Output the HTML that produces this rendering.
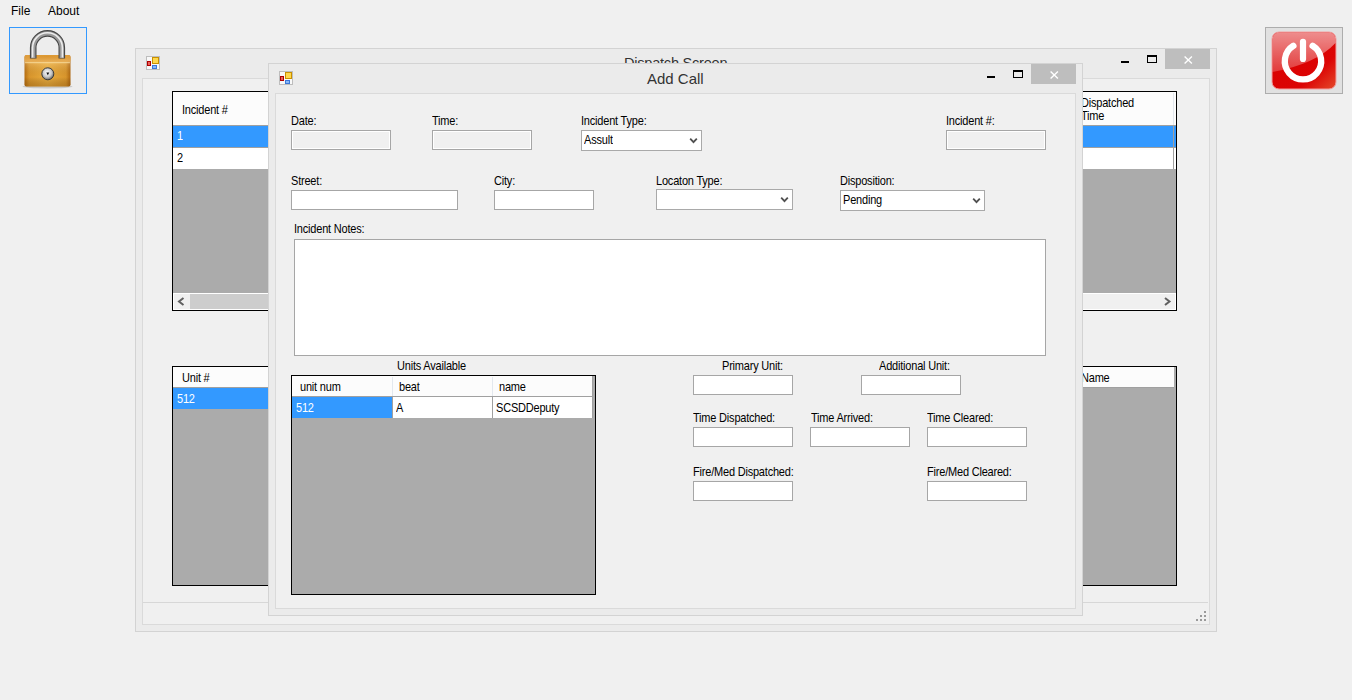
<!DOCTYPE html>
<html><head><meta charset="utf-8">
<style>
html,body{margin:0;padding:0;}
body{width:1352px;height:700px;overflow:hidden;background:#f0f0f0;position:relative;font-family:"Liberation Sans",sans-serif;font-size:11px;color:#000;}
.a{position:absolute;box-sizing:border-box;}
.t{position:absolute;white-space:nowrap;line-height:13px;font-size:11px;letter-spacing:-0.2px;transform:scaleY(1.12);transform-origin:0 10.3px;}
.nt{transform:none;}
.w{color:#fff;}
.win{position:absolute;box-sizing:border-box;border:1px solid #d3d3d3;background:#ebebeb;}
.cli{position:absolute;box-sizing:border-box;border:1px solid #dadada;background:#f0f0f0;}
.close{position:absolute;background:#bebebe;}
.tb{position:absolute;box-sizing:border-box;border:1px solid #a6a6a6;background:#fff;}
.ro{background:#f0f0f0;box-shadow:inset 0 0 0 1px #fff;}
.cb{position:absolute;box-sizing:border-box;border:1px solid #a9a9a9;background:#fff;}
.grid{position:absolute;box-sizing:border-box;border:1px solid #000;background:#ababab;overflow:hidden;}
.hdr{position:absolute;background:#fcfcfc;}
.sel{position:absolute;background:#3399ff;}
.wh{position:absolute;background:#fff;}
.gl{position:absolute;background:#a0a0a0;}
.hl{position:absolute;background:#e3e8ee;}
</style></head><body>

<!-- menu -->
<div class="t nt" style="left:11px;top:4px;font-size:12px;line-height:14px;letter-spacing:0;">File</div>
<div class="t nt" style="left:48px;top:4px;font-size:12px;line-height:14px;letter-spacing:0;">About</div>

<!-- lock button -->
<div class="a" style="left:9px;top:27px;width:78px;height:67px;border:1px solid #3399ff;background:#ededed;"></div>
<svg class="a" style="left:0;top:0;" width="100" height="100" viewBox="0 0 100 100">
<defs>
<linearGradient id="gold" x1="0" y1="0" x2="1" y2="0">
<stop offset="0" stop-color="#b86e10"/><stop offset="0.1" stop-color="#d9962c"/><stop offset="0.5" stop-color="#eaad3e"/><stop offset="0.9" stop-color="#d9962c"/><stop offset="1" stop-color="#b06810"/>
</linearGradient>
<linearGradient id="goldv" x1="0" y1="0" x2="0" y2="1">
<stop offset="0" stop-color="#fff" stop-opacity="0"/><stop offset="0.3" stop-color="#fff" stop-opacity="0.12"/><stop offset="0.7" stop-color="#000" stop-opacity="0"/><stop offset="1" stop-color="#6a3a00" stop-opacity="0.3"/>
</linearGradient>
<radialGradient id="lid" cx="0.5" cy="0.2" r="0.7">
<stop offset="0" stop-color="#d8902a"/><stop offset="1" stop-color="#e6a84a"/>
</radialGradient>
<radialGradient id="key" cx="0.45" cy="0.4" r="0.6">
<stop offset="0" stop-color="#ffffff"/><stop offset="0.6" stop-color="#c8c8c8"/><stop offset="1" stop-color="#6a6a6a"/>
</radialGradient>
</defs>
<ellipse cx="47.5" cy="86.5" rx="25" ry="2" fill="#000" opacity="0.15"/>
<rect x="24.5" y="55" width="46" height="31.5" rx="2" fill="url(#gold)"/>
<rect x="24.5" y="55" width="46" height="7.5" rx="2" fill="url(#lid)" opacity="0.85"/>
<rect x="25" y="62" width="45" height="1.3" fill="#fbe0a0" opacity="0.65"/>
<rect x="24.5" y="55" width="46" height="31.5" rx="2" fill="url(#goldv)"/>
<path d="M33.2,58.5 V47.7 A14.3,14.3 0 0 1 61.8,47.7 V58.5" fill="none" stroke="#474747" stroke-width="6.6"/>
<path d="M33.2,58 V47.7 A14.3,14.3 0 0 1 61.8,47.7 V58" fill="none" stroke="#9a9a9a" stroke-width="4.4"/>
<path d="M32.6,57.5 V47.7 A14.9,14.9 0 0 1 62.4,47.7 V57.5" fill="none" stroke="#ececec" stroke-width="1.6"/>
<circle cx="47.8" cy="73.8" r="6" fill="url(#key)" stroke="#3a3a3a" stroke-width="1"/>
<path d="M46.3,72.4 L49.3,72.4 L47.8,75.2 Z" fill="#111"/>
</svg>

<!-- power button -->
<div class="a" style="left:1265px;top:27px;width:78px;height:67px;border:1px solid #adadad;background:#e1e1e1;"></div>
<svg class="a" style="left:1260px;top:20px;" width="92" height="80" viewBox="1260 20 92 80">
<defs>
<linearGradient id="red" x1="0" y1="0" x2="1" y2="1">
<stop offset="0" stop-color="#d80000"/><stop offset="0.7" stop-color="#dc0404"/><stop offset="1" stop-color="#e44a2a"/>
</linearGradient>
<linearGradient id="gloss" x1="0" y1="0" x2="0" y2="1">
<stop offset="0" stop-color="#fff" stop-opacity="0.55"/><stop offset="1" stop-color="#fff" stop-opacity="0.22"/>
</linearGradient>
</defs>
<rect x="1272" y="32" width="64" height="57" rx="7" fill="url(#red)" stroke="#f2a0a0" stroke-width="1"/>
<path d="M1272.5,39 A6.5,6.5 0 0 1 1279,32.5 H1329 A6.5,6.5 0 0 1 1335.5,39 V43 Q1316,64 1272.5,72 Z" fill="url(#gloss)"/>
<path d="M1293.4,45.8 A18.2,18.2 0 1 0 1312.6,45.8" fill="none" stroke="#fff" stroke-width="6.3" stroke-linecap="round"/>
<line x1="1303" y1="41.8" x2="1303" y2="59" stroke="#fff" stroke-width="6.2" stroke-linecap="round"/>
</svg>

<!-- ===== Dispatch window ===== -->
<div class="win" style="left:135px;top:48px;width:1082px;height:584px;"></div>
<div class="cli" style="left:142px;top:78px;width:1068px;height:547px;"></div>
<div class="close" style="left:1165px;top:49px;width:45px;height:20px;"></div>
<svg class="a" style="left:1184px;top:56px;" width="9" height="9" viewBox="0 0 9 9"><path d="M0.6,0.6 L7.9,7.6 M7.9,0.6 L0.6,7.6" stroke="#fff" stroke-width="1.4"/></svg>
<div class="a" style="left:1147px;top:55px;width:10px;height:8px;border:1px solid #000;border-top-width:2px;"></div>
<div class="a" style="left:1121px;top:61px;width:8px;height:2px;background:#000;"></div>
<div class="t nt" style="left:624px;top:54px;font-size:14.6px;line-height:18px;color:#333;letter-spacing:-0.25px;">Dispatch Screen</div>
<svg class="a" style="left:146px;top:56px;" width="14" height="14" viewBox="0 0 14 14">
<rect x="0.5" y="0.5" width="13" height="13" fill="#f8f8f8" stroke="#bdbdbd"/>
<rect x="6" y="1" width="7" height="7" fill="#c99000"/><rect x="7" y="2" width="5" height="5" fill="#ffd84c"/>
<rect x="1" y="5" width="4" height="5" fill="#b00000"/><rect x="2" y="6" width="2" height="3" fill="#e8605a"/>
<rect x="6" y="9" width="5" height="4" fill="#3c78d8"/><rect x="7" y="10" width="3" height="2" fill="#8ab8f8"/>
</svg>

<!-- grid 1 -->
<div class="grid" style="left:172px;top:91px;width:1005px;height:220px;"></div>
<div class="hdr" style="left:173px;top:92px;width:1003px;height:33px;"></div>
<div class="hl" style="left:1173px;top:93px;width:1px;height:32px;"></div>
<div class="gl" style="left:173px;top:125px;width:1003px;height:1px;"></div>
<div class="sel" style="left:173px;top:126px;width:1003px;height:21px;"></div>
<div class="gl" style="left:173px;top:147px;width:1003px;height:1px;"></div>
<div class="wh" style="left:173px;top:148px;width:1003px;height:21px;"></div>
<div class="gl" style="left:1173px;top:126px;width:1px;height:43px;"></div>
<div class="t" style="left:182px;top:104px;">Incident #</div>
<div class="t w" style="left:177px;top:130px;">1</div>
<div class="t" style="left:177px;top:152px;">2</div>
<div class="t" style="left:1081px;top:98px;line-height:11.6px;transform-origin:0 9.6px;">Dispatched<br>Time</div>
<!-- scrollbar -->
<div class="a" style="left:173px;top:293px;width:1003px;height:17px;background:#fff;"></div>
<div class="a" style="left:174px;top:294px;width:1001px;height:15px;background:#f0f0f0;"></div>
<div class="a" style="left:190px;top:294px;width:880px;height:15px;background:#cdcdcd;"></div>
<svg class="a" style="left:176px;top:296px;" width="10" height="11" viewBox="0 0 10 11"><path d="M7.5,2 L3,5.5 L7.5,9" fill="none" stroke="#606060" stroke-width="2"/></svg>
<svg class="a" style="left:1162px;top:296px;" width="10" height="11" viewBox="0 0 10 11"><path d="M3,2 L7.5,5.5 L3,9" fill="none" stroke="#606060" stroke-width="2"/></svg>

<!-- grid 2 -->
<div class="grid" style="left:172px;top:366px;width:1005px;height:220px;"></div>
<div class="hdr" style="left:173px;top:367px;width:1001px;height:20px;"></div>
<div class="gl" style="left:173px;top:387px;width:1001px;height:1px;"></div>
<div class="sel" style="left:173px;top:388px;width:100px;height:21px;"></div>
<div class="t" style="left:182px;top:372px;">Unit #</div>
<div class="t w" style="left:177px;top:393px;">512</div>
<div class="t" style="left:1081px;top:372px;">Name</div>

<!-- status strip line -->
<div class="a" style="left:143px;top:602px;width:1065px;height:1px;background:#d7d7d7;"></div>
<!-- grip -->
<div class="a" style="left:1204px;top:611px;width:2px;height:2px;background:#9a9a9a;"></div>
<div class="a" style="left:1200px;top:615px;width:2px;height:2px;background:#9a9a9a;"></div>
<div class="a" style="left:1204px;top:615px;width:2px;height:2px;background:#9a9a9a;"></div>
<div class="a" style="left:1196px;top:619px;width:2px;height:2px;background:#9a9a9a;"></div>
<div class="a" style="left:1200px;top:619px;width:2px;height:2px;background:#9a9a9a;"></div>
<div class="a" style="left:1204px;top:619px;width:2px;height:2px;background:#9a9a9a;"></div>

<!-- ===== Add Call window ===== -->
<div class="win" style="left:268px;top:63px;width:815px;height:553px;"></div>
<div class="cli" style="left:275px;top:93px;width:801px;height:516px;"></div>
<div class="close" style="left:1031px;top:64px;width:45px;height:20px;"></div>
<svg class="a" style="left:1050px;top:71px;" width="9" height="9" viewBox="0 0 9 9"><path d="M0.6,0.6 L7.9,7.6 M7.9,0.6 L0.6,7.6" stroke="#fff" stroke-width="1.4"/></svg>
<div class="a" style="left:1013px;top:70px;width:10px;height:8px;border:1px solid #000;border-top-width:2px;"></div>
<div class="a" style="left:987px;top:76px;width:8px;height:2px;background:#000;"></div>
<div class="t nt" style="left:647px;top:70px;font-size:15px;line-height:18px;color:#333;letter-spacing:0;">Add Call</div>
<svg class="a" style="left:279px;top:71px;" width="14" height="14" viewBox="0 0 14 14">
<rect x="0.5" y="0.5" width="13" height="13" fill="#f8f8f8" stroke="#bdbdbd"/>
<rect x="6" y="1" width="7" height="7" fill="#c99000"/><rect x="7" y="2" width="5" height="5" fill="#ffd84c"/>
<rect x="1" y="5" width="4" height="5" fill="#b00000"/><rect x="2" y="6" width="2" height="3" fill="#e8605a"/>
<rect x="6" y="9" width="5" height="4" fill="#3c78d8"/><rect x="7" y="10" width="3" height="2" fill="#8ab8f8"/>
</svg>

<!-- labels -->
<div class="t" style="left:291px;top:115px;">Date:</div>
<div class="t" style="left:432px;top:115px;">Time:</div>
<div class="t" style="left:581px;top:115px;">Incident Type:</div>
<div class="t" style="left:946px;top:115px;">Incident #:</div>
<div class="t" style="left:291px;top:175px;">Street:</div>
<div class="t" style="left:494px;top:175px;">City:</div>
<div class="t" style="left:656px;top:175px;">Locaton Type:</div>
<div class="t" style="left:840px;top:175px;">Disposition:</div>
<div class="t" style="left:294px;top:223px;">Incident Notes:</div>
<div class="t" style="left:397px;top:360px;">Units Available</div>
<div class="t" style="left:722px;top:360px;">Primary Unit:</div>
<div class="t" style="left:879px;top:360px;">Additional Unit:</div>
<div class="t" style="left:693px;top:412px;">Time Dispatched:</div>
<div class="t" style="left:811px;top:412px;">Time Arrived:</div>
<div class="t" style="left:927px;top:412px;">Time Cleared:</div>
<div class="t" style="left:693px;top:466px;">Fire/Med Dispatched:</div>
<div class="t" style="left:927px;top:466px;">Fire/Med Cleared:</div>

<!-- inputs -->
<div class="tb ro" style="left:291px;top:130px;width:100px;height:20px;"></div>
<div class="tb ro" style="left:432px;top:130px;width:100px;height:20px;"></div>
<div class="cb" style="left:581px;top:130px;width:121px;height:21px;"></div>
<div class="t" style="left:584px;top:134px;">Assult</div>
<svg class="a" style="left:689px;top:137px;" width="9" height="8" viewBox="0 0 9 8"><path d="M1.2,1.6 L4.5,5.2 L7.8,1.6" fill="none" stroke="#505050" stroke-width="1.8"/></svg>
<div class="tb ro" style="left:946px;top:130px;width:100px;height:20px;"></div>
<div class="tb" style="left:291px;top:190px;width:167px;height:20px;"></div>
<div class="tb" style="left:494px;top:190px;width:100px;height:20px;"></div>
<div class="cb" style="left:656px;top:189px;width:137px;height:21px;"></div>
<svg class="a" style="left:780px;top:196px;" width="9" height="8" viewBox="0 0 9 8"><path d="M1.2,1.6 L4.5,5.2 L7.8,1.6" fill="none" stroke="#505050" stroke-width="1.8"/></svg>
<div class="cb" style="left:840px;top:190px;width:145px;height:21px;"></div>
<div class="t" style="left:843px;top:194px;">Pending</div>
<svg class="a" style="left:972px;top:197px;" width="9" height="8" viewBox="0 0 9 8"><path d="M1.2,1.6 L4.5,5.2 L7.8,1.6" fill="none" stroke="#505050" stroke-width="1.8"/></svg>
<div class="tb" style="left:294px;top:239px;width:752px;height:117px;"></div>

<!-- units grid -->
<div class="grid" style="left:291px;top:375px;width:305px;height:220px;"></div>
<div class="hdr" style="left:292px;top:376px;width:301px;height:20px;"></div>
<div class="hl" style="left:392px;top:377px;width:1px;height:19px;"></div>
<div class="hl" style="left:492px;top:377px;width:1px;height:19px;"></div>
<div class="gl" style="left:292px;top:396px;width:301px;height:1px;"></div>
<div class="sel" style="left:292px;top:397px;width:100px;height:21px;"></div>
<div class="wh" style="left:393px;top:397px;width:99px;height:21px;"></div>
<div class="wh" style="left:493px;top:397px;width:99px;height:21px;"></div>
<div class="gl" style="left:392px;top:397px;width:1px;height:21px;"></div>
<div class="gl" style="left:492px;top:397px;width:1px;height:21px;"></div>
<div class="gl" style="left:592px;top:376px;width:1px;height:42px;"></div>
<div class="t" style="left:300px;top:381px;">unit num</div>
<div class="t" style="left:399px;top:381px;">beat</div>
<div class="t" style="left:499px;top:381px;">name</div>
<div class="t w" style="left:296px;top:402px;">512</div>
<div class="t" style="left:396px;top:402px;">A</div>
<div class="t" style="left:496px;top:402px;">SCSDDeputy</div>

<div class="tb" style="left:693px;top:375px;width:100px;height:20px;"></div>
<div class="tb" style="left:861px;top:375px;width:100px;height:20px;"></div>
<div class="tb" style="left:693px;top:427px;width:100px;height:20px;"></div>
<div class="tb" style="left:810px;top:427px;width:100px;height:20px;"></div>
<div class="tb" style="left:927px;top:427px;width:100px;height:20px;"></div>
<div class="tb" style="left:693px;top:481px;width:100px;height:20px;"></div>
<div class="tb" style="left:927px;top:481px;width:100px;height:20px;"></div>

</body></html>
